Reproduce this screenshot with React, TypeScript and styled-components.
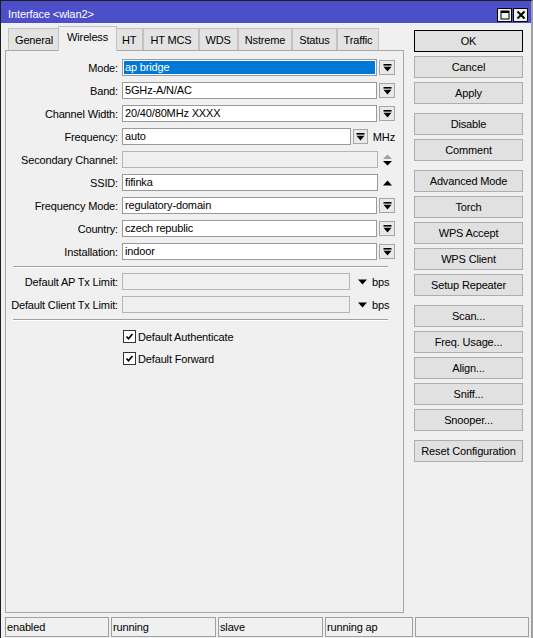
import React from 'react'
import styled, { createGlobalStyle } from 'styled-components'

const tabs: string[] = ['General', 'Wireless', 'HT', 'HT MCS', 'WDS', 'Nstreme', 'Status', 'Traffic']

const buttonGroups: string[][] = [
    ['OK', 'Cancel', 'Apply'],
    ['Disable', 'Comment'],
    ['Advanced Mode', 'Torch', 'WPS Accept', 'WPS Client', 'Setup Repeater'],
    ['Scan...', 'Freq. Usage...', 'Align...', 'Sniff...', 'Snooper...'],
    ['Reset Configuration'],
]

const statusCells: { text: string; width: number }[] = [
    { text: 'enabled', width: 104 },
    { text: 'running', width: 105 },
    { text: 'slave', width: 105 },
    { text: 'running ap', width: 88 },
    { text: '', width: 114 },
]

const DropIcon = () => (
    <svg width="9" height="8" viewBox="0 0 9 8">
        <rect x="0.5" y="0" width="8" height="1.6" fill="#000" />
        <path d="M0.5 2.8h8L4.5 7.5z" fill="#000" />
    </svg>
)

const DownIcon = () => (
    <svg width="9" height="6" viewBox="0 0 9 6">
        <path d="M0 0.5h9L4.5 5.5z" fill="#000" />
    </svg>
)

const UpIcon = () => (
    <svg width="9" height="6" viewBox="0 0 9 6">
        <path d="M0 5.5h9L4.5 0.5z" fill="#000" />
    </svg>
)

const UpDownIcon = () => (
    <svg width="9" height="12" viewBox="0 0 9 12">
        <path d="M0 5h9L4.5 0.5z" fill="#a0a0a0" />
        <path d="M0 7h9L4.5 11.5z" fill="#000" />
    </svg>
)

const DropButton: React.FC<{ width?: number }> = ({ width = 16 }) => (
    <DropBox style={{ width }}>
        <DropIcon />
    </DropBox>
)

type RowProps = {
    label: string
    value?: string
    selected?: boolean
    disabled?: boolean
    suffixWidth: number
    children?: React.ReactNode
}

const FormRow: React.FC<RowProps> = ({ label, value, selected, disabled, suffixWidth, children }) => (
    <Row>
        <Label>{label}:</Label>
        <Field $disabled={disabled} $selected={selected}>
            {selected ? <Highlight>{value}</Highlight> : value}
        </Field>
        <Suffix style={{ width: suffixWidth }}>{children}</Suffix>
    </Row>
)

const Check: React.FC<{ label: string }> = ({ label }) => (
    <CheckRow>
        <CheckBox>
            <svg width="9" height="9" viewBox="0 0 9 9">
                <path d="M1.5 4.5l2 2.2L7.5 2" stroke="#000" strokeWidth="1.7" fill="none" />
            </svg>
        </CheckBox>
        {label}
    </CheckRow>
)

export default function App() {
    return (
        <>
            <GlobalStyle />
            <Window>
                <TitleBar>
                    <Title>Interface &lt;wlan2&gt;</Title>
                    <TitleButtons>
                        <TitleButton>
                            <svg width="10" height="10" viewBox="0 0 10 10">
                                <rect x="1" y="1" width="8" height="8" stroke="#000" strokeWidth="1" fill="none" />
                                <rect x="1" y="1" width="8" height="2" fill="#000" />
                            </svg>
                        </TitleButton>
                        <TitleButton>
                            <svg width="10" height="10" viewBox="0 0 10 10">
                                <path d="M1.5 1.5l7 7M8.5 1.5l-7 7" stroke="#000" strokeWidth="2" />
                            </svg>
                        </TitleButton>
                    </TitleButtons>
                </TitleBar>
                <Main>
                    <LeftColumn>
                        <TabRow>
                            {tabs.map((tab) => (
                                <Tab key={tab} $active={tab === 'Wireless'}>
                                    {tab}
                                </Tab>
                            ))}
                        </TabRow>
                        <Panel>
                            <FormRow label="Mode" value="ap bridge" selected suffixWidth={18}>
                                <DropButton />
                            </FormRow>
                            <FormRow label="Band" value="5GHz-A/N/AC" suffixWidth={18}>
                                <DropButton />
                            </FormRow>
                            <FormRow label="Channel Width" value="20/40/80MHz XXXX" suffixWidth={18}>
                                <DropButton />
                            </FormRow>
                            <FormRow label="Frequency" value="auto" suffixWidth={44}>
                                <DropButton width={15} />
                                <Unit>MHz</Unit>
                            </FormRow>
                            <FormRow label="Secondary Channel" disabled suffixWidth={17}>
                                <IconCell>
                                    <UpDownIcon />
                                </IconCell>
                            </FormRow>
                            <FormRow label="SSID" value="fifinka" suffixWidth={17}>
                                <IconCell>
                                    <UpIcon />
                                </IconCell>
                            </FormRow>
                            <FormRow label="Frequency Mode" value="regulatory-domain" suffixWidth={18}>
                                <DropButton />
                            </FormRow>
                            <FormRow label="Country" value="czech republic" suffixWidth={18}>
                                <DropButton />
                            </FormRow>
                            <FormRow label="Installation" value="indoor" suffixWidth={18}>
                                <DropButton />
                            </FormRow>
                            <Separator />
                            <FormRow label="Default AP Tx Limit" disabled suffixWidth={45}>
                                <LimitArrow>
                                    <DownIcon />
                                </LimitArrow>
                                <Unit>bps</Unit>
                            </FormRow>
                            <FormRow label="Default Client Tx Limit" disabled suffixWidth={45}>
                                <LimitArrow>
                                    <DownIcon />
                                </LimitArrow>
                                <Unit>bps</Unit>
                            </FormRow>
                            <Separator />
                            <Checks>
                                <Check label="Default Authenticate" />
                                <Check label="Default Forward" />
                            </Checks>
                        </Panel>
                    </LeftColumn>
                    <ButtonColumn>
                        {buttonGroups.map((group, i) => (
                            <ButtonGroup key={i}>
                                {group.map((name) => (
                                    <Button key={name} $primary={name === 'OK'}>
                                        {name}
                                    </Button>
                                ))}
                            </ButtonGroup>
                        ))}
                    </ButtonColumn>
                </Main>
                <StatusBar>
                    {statusCells.map((cell, i) => (
                        <StatusCell key={i} style={{ width: cell.width }}>
                            {cell.text}
                        </StatusCell>
                    ))}
                </StatusBar>
            </Window>
        </>
    )
}

const GlobalStyle = createGlobalStyle`
    * {
        box-sizing: border-box;
    }
    html, body {
        margin: 0;
        padding: 0;
        background: #f0f0f0;
    }
    body {
        font-family: 'Liberation Sans', Arial, sans-serif;
        font-size: 11px;
        letter-spacing: -0.15px;
        color: #000;
    }
`
const Window = styled.div`
    display: flex;
    flex-direction: column;
    width: 533px;
    height: 638px;
    background: #f0f0f0;
    border-top: 1px solid #1e1e1e;
    border-left: 1px solid #1e1e1e;
    border-right: 2px solid #a0a0a0;
    overflow: hidden;
`
const TitleBar = styled.div`
    display: flex;
    align-items: flex-end;
    justify-content: space-between;
    height: 22px;
    padding: 0 3px 1px 7px;
    background: #4d4fc9;
    color: #fff;
    flex-shrink: 0;
`
const Title = styled.span`
    line-height: 14px;
    padding-bottom: 1px;
    letter-spacing: -0.1px;
`
const TitleButtons = styled.div`
    display: flex;
    gap: 1px;
`
const TitleButton = styled.div`
    display: flex;
    align-items: center;
    justify-content: center;
    width: 15px;
    height: 14px;
    background: #f0f0f0;
    border: 1px solid #000;
`
const Main = styled.div`
    display: flex;
    flex: 1;
    min-height: 0;
    padding: 3px 0 0 4px;
`
const LeftColumn = styled.div`
    display: flex;
    flex-direction: column;
    width: 399px;
`
const TabRow = styled.div`
    display: flex;
    align-items: flex-end;
    height: 24px;
    padding-left: 3px;
    flex-shrink: 0;
`
const Tab = styled.div<{ $active?: boolean }>`
    position: relative;
    z-index: ${(p) => (p.$active ? 1 : 0)};
    height: ${(p) => (p.$active ? '25px' : '22px')};
    margin: ${(p) => (p.$active ? '0 -2px -1px' : '0')};
    padding: ${(p) => (p.$active ? '0 8px' : '0 6px')};
    line-height: ${(p) => (p.$active ? '21px' : '22px')};
    background: ${(p) => (p.$active ? '#f0f0f0' : '#e3e3e3')};
    border: 1px solid #c2c2c2;
    border-bottom: none;
    white-space: nowrap;
`
const Panel = styled.div`
    flex: 1;
    padding: 8px 8px 0 0;
    border: 1px solid #a8a8a8;
    background: #f0f0f0;
`
const Row = styled.div`
    display: flex;
    align-items: center;
    height: 17px;
    margin-bottom: 6px;
`
const Label = styled.span`
    width: 112px;
    margin-right: 4px;
    flex-shrink: 0;
    text-align: right;
    white-space: nowrap;
`
const Field = styled.div<{ $disabled?: boolean; $selected?: boolean }>`
    flex: 1;
    height: 17px;
    padding: ${(p) => (p.$selected ? '1px' : '0 2px')};
    line-height: 15px;
    background: ${(p) => (p.$disabled ? '#f0f0f0' : '#fff')};
    border: 1px solid ${(p) => (p.$disabled ? '#b4b4b4' : '#9a9a9a')};
    white-space: nowrap;
    overflow: hidden;
`
const Highlight = styled.span`
    display: block;
    height: 13px;
    padding-left: 1px;
    line-height: 13px;
    background: #0078d7;
    color: #fff;
`
const Suffix = styled.div`
    display: flex;
    align-items: center;
    flex-shrink: 0;
    height: 17px;
`
const DropBox = styled.div`
    display: flex;
    align-items: center;
    justify-content: center;
    height: 15px;
    margin-left: 2px;
    background: #e9e9e9;
    border: 1px solid #a6a6a6;
`
const IconCell = styled.div`
    display: flex;
    align-items: center;
    justify-content: center;
    width: 100%;
    padding-left: 2px;
`
const LimitArrow = styled.div`
    display: flex;
    margin-left: 8px;
`
const Unit = styled.span`
    margin-left: 5px;
`
const Separator = styled.div`
    height: 2px;
    margin: 1px 7px 5px;
    border-top: 1px solid #a0a0a0;
    border-bottom: 1px solid #fff;
`
const Checks = styled.div`
    padding-top: 2px;
`
const CheckRow = styled.div`
    display: flex;
    align-items: center;
    height: 17px;
    margin-bottom: 5px;
    padding-left: 117px;
`
const CheckBox = styled.span`
    display: flex;
    align-items: center;
    justify-content: center;
    width: 13px;
    height: 13px;
    margin-right: 2px;
    background: #fff;
    border: 1px solid #333;
`
const ButtonColumn = styled.div`
    display: flex;
    flex-direction: column;
    gap: 9px;
    width: 109px;
    margin-left: 10px;
    padding-top: 4px;
`
const ButtonGroup = styled.div`
    display: flex;
    flex-direction: column;
    gap: 4px;
`
const Button = styled.div<{ $primary?: boolean }>`
    height: 22px;
    line-height: 20px;
    text-align: center;
    background: #e1e1e1;
    border: 1px solid ${(p) => (p.$primary ? '#000' : '#adadad')};
    white-space: nowrap;
`
const StatusBar = styled.div`
    display: flex;
    gap: 2px;
    height: 20px;
    margin: 4px 0 1px 4px;
    flex-shrink: 0;
`
const StatusCell = styled.div`
    height: 20px;
    padding-left: 1px;
    line-height: 18px;
    border: 1px solid #a0a0a0;
    white-space: nowrap;
`
